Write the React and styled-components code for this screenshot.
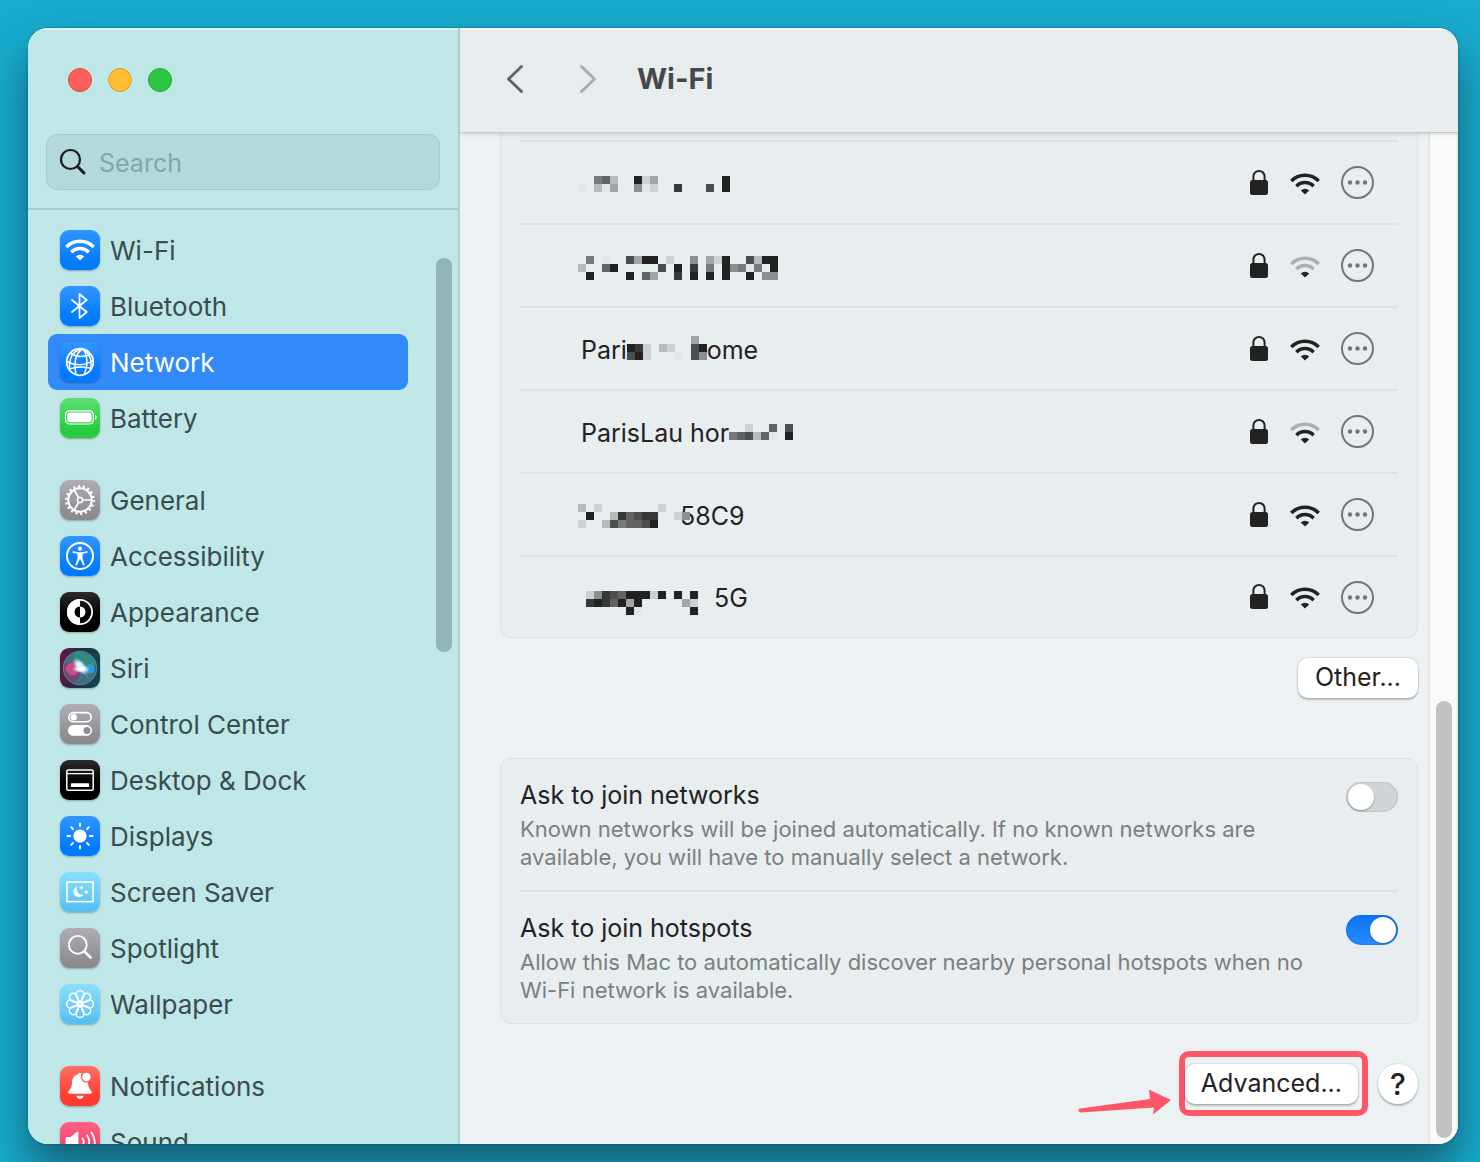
import React, { useState } from 'react';
import styled, { createGlobalStyle, css } from 'styled-components';

const GlobalStyle = createGlobalStyle`
  *, *::before, *::after {
    box-sizing: border-box;
  }

  body {
    margin: 0;
    font-family: Inter, 'Liberation Sans', sans-serif;
    background: #17acd0;
  }

  button, input {
    font-family: inherit;
  }
`;

const Desktop = styled.div`
  display: flex;
  height: 100vh;
  padding: 28px 22px 18px 28px;
  overflow: hidden;
`;

const Window = styled.div`
  display: flex;
  flex: 1;
  min-width: 0;
  border-radius: 20px;
  overflow: hidden;
  background: #ecf1f4;
  box-shadow: 0 0 2px rgba(0, 40, 60, 0.6), 0 24px 44px rgba(20, 50, 60, 0.64);
`;

/* sidebar */

const Sidebar = styled.aside`
  display: flex;
  flex-direction: column;
  flex: none;
  width: 432px;
  background: #bfe7e7;
  border-right: 2px solid #b0d0d2;
  box-shadow: inset 0 2px 0 #d9f1f1;
`;

const TrafficLights = styled.div`
  display: flex;
  gap: 16px;
  padding: 40px 40px 42px;
`;

const TrafficLight = styled.button`
  width: 24px;
  height: 24px;
  padding: 0;
  border: 1px solid ${({ $edge }) => $edge};
  border-radius: 50%;
  background: ${({ $color }) => $color};
`;

const SearchField = styled.label`
  display: flex;
  align-items: center;
  gap: 10px;
  height: 56px;
  margin: 0 18px;
  padding: 0 12px;
  border: 1px solid #a6cccd;
  border-radius: 11px;
  background: #b3d9da;
`;

const SearchInput = styled.input`
  flex: 1;
  min-width: 0;
  padding: 2px 0 0;
  border: 0;
  outline: 0;
  background: none;
  font-size: 25px;
  line-height: 32px;
  color: #222;

  &::placeholder {
    color: #86a5a6;
    opacity: 1;
  }
`;

const SidebarBody = styled.div`
  display: flex;
  flex: 1;
  min-height: 0;
  margin-top: 18px;
  border-top: 2px solid #a5cccd;
  overflow: hidden;
`;

const Nav = styled.nav`
  flex: 1;
  padding: 12px 28px 0 20px;
`;

const NavGroup = styled.ul`
  margin: 0 0 26px;
  padding: 0;
  list-style: none;
`;

const NavLink = styled.a`
  display: flex;
  align-items: center;
  gap: 10px;
  height: 56px;
  padding-left: 12px;
  border-radius: 9px;
  font-size: 26px;
  line-height: 32px;
  text-decoration: none;
  color: #3a4c4c;

  ${({ $active }) =>
    $active &&
    css`
      color: #fff;
      background: #3289f8;
    `}
`;

const NavLabel = styled.span`
  padding-top: 2px;
`;

const tileColors = {
  blue: 'linear-gradient(#3396ff, #007aff 80%)',
  green: 'linear-gradient(#5fe073, #28cc41 80%)',
  gray: 'linear-gradient(#aeaeb2, #8a8a8f 90%)',
  black: 'linear-gradient(#2b2b2c, #000 60%)',
  sky: 'linear-gradient(#8be0fc, #56bdf0)',
  red: 'linear-gradient(#ff6f66, #ff3b30 80%)',
  pink: 'linear-gradient(#ff6289, #ff2d55)',
  siri: 'linear-gradient(100deg, #6b1238, #1f2f4a 50%, #0e4a52)',
};

const Tile = styled.svg`
  flex: none;
  width: 40px;
  height: 40px;
  border-radius: 9px;
  background: ${({ $tone }) => tileColors[$tone]};
  box-shadow: 0 1px 2px rgba(0, 0, 0, 0.3);
`;

const SidebarScroll = styled.div`
  flex: none;
  width: 22px;
  padding-top: 48px;
`;

const Thumb = styled.div`
  width: 16px;
  height: ${({ $size }) => $size};
  border-radius: 8px;
  background: ${({ $color }) => $color};
`;

/* main pane */

const Main = styled.main`
  display: flex;
  flex-direction: column;
  flex: 1;
  min-width: 0;
`;

const Toolbar = styled.header`
  display: flex;
  align-items: center;
  flex: none;
  height: 105px;
  padding: 0 40px 2px;
  border-bottom: 1px solid #c3c8cb;
  background: #e7ecef;
  box-shadow: inset 0 2px 0 #f7f9fa, 0 2px 3px rgba(0, 0, 0, 0.1);
  z-index: 1;
`;

const NavButton = styled.button`
  width: 32px;
  height: 40px;
  margin-right: 40px;
  padding: 0;
  border: 0;
  background: none;
  color: #636466;

  &:disabled {
    color: #aaadaf;
  }
`;

const Title = styled.h1`
  margin: 0 0 0 -7px;
  font-size: 29px;
  line-height: 36px;
  font-weight: 700;
  color: #454748;
`;

const MainBody = styled.div`
  display: flex;
  flex: 1;
  min-height: 0;
  overflow: hidden;
`;

const Content = styled.div`
  flex: 1;
  min-width: 0;
  padding: 0 10px 0 40px;
`;

const ScrollTrack = styled.div`
  flex: none;
  width: 30px;
  height: 100%;
  padding: 568px 0 6px 6px;
  border-left: 2px solid #e5e7e8;
  border-right: 2px solid #eeeeee;
  background: #fafafa;
`;

const Card = styled.section`
  padding: 0 19px;
  border: 1px solid #dae0e3;
  border-radius: 11px;
  background: #e8edf0;
`;

const NetworkCard = styled(Card)`
  padding-top: 7px;
  border-top: 0;
  border-radius: 0 0 11px 11px;
`;

const NetworkList = styled.ul`
  margin: 0;
  padding: 0;
  list-style: none;
`;

const NetworkRow = styled.li`
  display: flex;
  align-items: center;
  height: 83px;
  padding: 0 24px 0 58px;
  border-top: 2px solid #dbe1e4;

  &:last-child {
    height: 82px;
  }
`;

const NetworkName = styled.div`
  display: flex;
  align-items: center;
  flex: 1;
  font-size: 25px;
  line-height: 32px;
  color: #222;
  white-space: pre;
`;

const NamePart = styled.span`
  padding-top: 2px;
  margin-left: ${({ $space }) => $space || 0}px;
`;

const Pixels = styled.svg`
  position: relative;
  flex: none;
  margin-left: ${({ $space }) => $space || 0}px;
  margin-right: ${({ $overlap }) => -($overlap || 0)}px;
`;

const NetworkStatus = styled.div`
  display: flex;
  align-items: center;
  gap: 21px;
`;

const MoreButton = styled.button`
  display: flex;
  padding: 0;
  border: 0;
  background: none;
  color: #737678;
`;

const Actions = styled.div`
  display: flex;
  justify-content: flex-end;
  align-items: center;
  padding: 20px 0 60px;
`;

const PushButton = styled.button`
  height: 40px;
  padding: 0 17px 2px;
  border: 0;
  border-radius: 10px;
  background: #fff;
  box-shadow: 0 0 1px 1px rgba(0, 0, 0, 0.08), 0 2px 2px rgba(0, 0, 0, 0.22);
  font-size: 25px;
  line-height: 32px;
  color: #222;
  white-space: nowrap;
`;

const Setting = styled.div`
  display: flex;
  justify-content: space-between;
  align-items: flex-start;
  padding: 19px 0;

  & + & {
    border-top: 2px solid #dbe1e4;
  }
`;

const SettingLabel = styled.label`
  display: block;
  font-size: 25px;
  line-height: 34px;
  color: #222;
`;

const SettingHint = styled.p`
  max-width: 800px;
  margin: 3px 0 0;
  font-size: 22px;
  line-height: 28px;
  color: #7b7f81;
`;

const Switch = styled.input`
  appearance: none;
  flex: none;
  width: 52px;
  height: 30px;
  margin: 4px 0 0;
  padding: 2px;
  border-radius: 15px;
  background: #d1d5d7;
  box-shadow: inset 0 0 2px rgba(0, 0, 0, 0.25);

  &::before {
    content: '';
    display: block;
    width: 26px;
    height: 26px;
    border-radius: 50%;
    background: #fff;
    box-shadow: 0 1px 2px rgba(0, 0, 0, 0.3);
  }

  &:checked {
    padding-left: 24px;
    background: linear-gradient(#0a75f5, #2a8bff);
  }
`;

const FooterActions = styled(Actions)`
  gap: 10px;
  padding: 27px 0 0;
`;

const Highlight = styled.div`
  position: relative;
  padding: 7px 4px 6px 0;
  border: 6px solid #ff5667;
  border-radius: 10px;

  ${PushButton} {
    padding: 0 16px 2px;
  }
`;

const Arrow = styled.svg`
  position: absolute;
  top: 30px;
  right: 190px;
`;

const HelpButton = styled(PushButton)`
  width: 40px;
  padding: 0;
  border-radius: 50%;
  font-size: 30px;
  font-weight: 500;
`;

/* icons */

const WifiShape = ({ faded = 0 }) => (
  <g fill="none" stroke="currentColor" strokeWidth="3.5">
    <path d="M6.3 16.9a19.2 19.2 0 0 1 27.4 0" opacity={faded > 0 ? 0.3 : 1} />
    <path d="M11.4 22.2a12 12 0 0 1 17.2 0" opacity={faded > 1 ? 0.3 : 1} />
    <path d="M20 30.6l-4.2-4.2a6 6 0 0 1 8.4 0z" fill="currentColor" stroke="none" />
  </g>
);

const rays = [0, 45, 90, 135, 180, 225, 270, 315];

const glyphs = {
  wifi: <WifiShape />,
  bluetooth: (
    <path
      d="M12 14l14.7 12-7.2 6V8l7.2 6L12 26"
      fill="none"
      stroke="#fff"
      strokeWidth="1.8"
      strokeLinejoin="round"
      strokeLinecap="round"
    />
  ),
  globe: (
    <g fill="none" stroke="#fff" strokeWidth="1.5">
      <circle cx="20" cy="20" r="13.3" strokeWidth="1.7" />
      <path d="M22.5 7c-7 4-9 14-6.5 25.5M22.5 7c5 5 6 16 1.5 25.5M22 7c-10 2-13 9-12.5 21M22.5 7c7 4 10 11 7.8 21" />
      <path d="M10.5 11.5c6 3.5 13 3.8 20 .8M6.8 19.5c8 4.5 18 4.5 26.2-1M9 27c8-2.5 16-2.5 22.5-.5" />
    </g>
  ),
  battery: (
    <g fill="#fff">
      <rect x="5.5" y="12.8" width="27.8" height="13.2" rx="4" fill="none" stroke="#fff" strokeWidth="1.2" />
      <rect x="7.2" y="14.6" width="24.4" height="9.6" rx="2.6" />
      <path d="M35 17c2.2.6 2.2 4.2 0 4.8z" />
    </g>
  ),
  gear: (
    <g fill="none" stroke="#fff">
      <circle cx="20" cy="20" r="13.6" strokeWidth="2.6" strokeDasharray="2.136 2.611" />
      <circle cx="20" cy="20" r="11.7" strokeWidth="2" />
      <circle cx="20" cy="20" r="2.6" strokeWidth="1.5" />
      <path d="M22.6 20h8.9M18.7 17.7L14.2 10M18.7 22.3L14.2 30" strokeWidth="1.7" />
    </g>
  ),
  accessibility: (
    <g fill="#fff">
      <circle cx="20" cy="20" r="13" fill="none" stroke="#fff" strokeWidth="2" />
      <circle cx="20" cy="12.7" r="2.1" />
      <path d="M13.2 15.3l5 1h3.6l5-1c1-.2 1.2 1.2.2 1.5l-4.5 1.2v4l2 6.5c.3 1-1.1 1.500-1.500.5L20.300 23.500h-.6L17 29c-.4 1-1.800.5-1.500-.5l2-6.500v-4L13 16.800c-1-.3-.8-1.700.2-1.500z" />
    </g>
  ),
  appearance: (
    <g>
      <circle cx="20" cy="20" r="12.1" fill="none" stroke="#fff" strokeWidth="1.8" />
      <path d="M20 7a13 13 0 0 0 0 26z" fill="#fff" />
      <path d="M20 14.500a5.500 5.500 0 0 0 0 11z" fill="#000" />
      <path d="M20 14.500a5.500 5.500 0 0 1 0 11z" fill="#fff" />
    </g>
  ),
  siri: (
    <g>
      <defs>
        <radialGradient id="siriGlow">
          <stop offset="0" stopColor="#fff" />
          <stop offset="0.45" stopColor="#f2fbff" stopOpacity="0.9" />
          <stop offset="1" stopColor="#9fd8ff" stopOpacity="0" />
        </radialGradient>
      </defs>
      <circle cx="20" cy="20" r="16.8" fill="#3f6f80" stroke="#5f9390" strokeWidth="0.8" />
      <path d="M13 5a17 17 0 0 1 23 12c-6 4-11 2-15 1S14 12 13 5z" fill="#2a9a80" opacity="0.7" />
      <path d="M4 16a17 17 0 0 0 8 18c6 0 8-6 8-14S8 14 4 16z" fill="#8a3a76" opacity="0.8" />
      <circle cx="12.500" cy="21" r="6.500" fill="#e2508a" opacity="0.750" />
      <circle cx="30" cy="21" r="4.500" fill="#2aa6f2" opacity="0.850" />
      <path d="M21 20l8 11" stroke="#d6606e" strokeWidth="1" />
      <ellipse cx="20.500" cy="18.500" rx="11" ry="5.500" fill="url(#siriGlow)" transform="rotate(48 20.500 18.500)" />
      <ellipse cx="21" cy="21" rx="9" ry="4" fill="url(#siriGlow)" />
    </g>
  ),
  controls: (
    <g fill="#fff">
      <rect x="8.800" y="8.600" width="22.400" height="9.200" rx="4.600" fill="none" stroke="#fff" strokeWidth="1.600" />
      <circle cx="13.700" cy="13.200" r="3.200" />
      <rect x="8" y="21" width="24" height="10.800" rx="5.400" />
      <circle cx="27" cy="26.400" r="3.500" fill="#8f8f94" />
    </g>
  ),
  dock: (
    <g>
      <rect x="6.800" y="10" width="26.400" height="20.200" rx="1.500" fill="none" stroke="#fff" strokeWidth="1.500" />
      <path d="M7 13.600h26" stroke="#fff" strokeWidth="1.300" />
      <rect x="10.800" y="23.300" width="18.400" height="3.800" rx="0.700" fill="#fff" />
    </g>
  ),
  displays: (
    <g>
      <circle cx="20" cy="20" r="6.600" fill="#fff" />
      {rays.map((angle) => (
        <path
          key={angle}
          d="M20 10V7.500"
          stroke="#fff"
          strokeWidth="2"
          strokeLinecap="round"
          transform={`rotate(${angle} 20 20)`}
        />
      ))}
    </g>
  ),
  screensaver: (
    <g fill="#fff">
      <rect x="7" y="10" width="26" height="19.600" fill="none" stroke="#fff" strokeWidth="1.600" />
      <path d="M17 14.500a5.500 5.500 0 1 0 6.700 7.800c-4.500 1.400-8.300-2.800-6.700-7.800z" />
      <path d="M21.500 13.200l.7 1.800 1.800.7-1.800.7-.7 1.800-.7-1.800-1.800-.7 1.800-.7zM26.200 17.600l.8 1.700 1.700.8-1.700.8-.8 1.700-.8-1.700-1.700-.8 1.700-.8z" />
    </g>
  ),
  spotlight: (
    <g fill="none" stroke="#fff">
      <circle cx="17.800" cy="16.800" r="8.900" strokeWidth="1.900" />
      <path d="M24.500 23.500l6 6" strokeWidth="2.600" strokeLinecap="round" />
    </g>
  ),
  wallpaper: (
    <g fill="none" stroke="#fff" strokeWidth="1.500">
      <circle cx="20" cy="20" r="2" />
      {rays.map((angle) => (
        <path
          key={angle}
          d="M20 18c-.8-1.600-4-3.600-4-7.400a4 4 0 0 1 8 0c0 3.800-3.200 5.800-4 7.400z"
          transform={`rotate(${angle} 20 20)`}
        />
      ))}
    </g>
  ),
  bell: (
    <g fill="#fff">
      <path d="M20 7c1 0 1.800.4 2 1.200A5.800 5.800 0 0 0 28 16.200c.2 4 .8 6.300 3.400 8.800 1.200 1.200.6 2.700-1 2.700H9.600c-1.600 0-2.200-1.500-1-2.700 3-3 3.200-5.500 3.500-9.500.2-3.800 2.400-6.200 5.900-7.200.2-.9 1-1.300 2-1.300z" />
      <path d="M16.200 29.700h7.600c-.6 2-1.900 3.200-3.800 3.200s-3.200-1.200-3.800-3.200z" />
      <circle cx="26.400" cy="11" r="5.600" fill="#ff645b" />
      <circle cx="26.400" cy="11" r="4.200" />
    </g>
  ),
  sound: (
    <g fill="none" stroke="#fff" strokeWidth="1.800" strokeLinecap="round">
      <path d="M6.500 16H11l6.500-5.500v19L11 24H6.500z" fill="#fff" strokeLinejoin="round" />
      <path d="M22.500 16.500q2.500 3.500 0 7M27 13.500q4.500 6.500 0 13M31.500 10.500q6.500 9.500 0 19" />
    </g>
  ),
};

const LockIcon = () => (
  <svg width="19" height="28" viewBox="0 0 19 28" aria-label="Locked">
    <rect x="0" y="11" width="18" height="15" rx="2.500" fill="#222" />
    <path d="M3.400 12.500V7.500a5.600 5.600 0 0 1 11.200 0v5" fill="none" stroke="#222" strokeWidth="2" />
  </svg>
);

const SignalIcon = ({ faded }) => (
  <svg width="30" height="24" viewBox="5 7 30 24" color="#222" aria-label="Signal strength">
    <WifiShape faded={faded} />
  </svg>
);

const MoreIcon = () => (
  <svg width="33" height="33" viewBox="0 0 33 33">
    <circle cx="16.500" cy="16.500" r="15.500" fill="none" stroke="currentColor" strokeWidth="2" />
    <circle cx="9" cy="16.500" r="2.200" fill="currentColor" />
    <circle cx="16.500" cy="16.500" r="2.200" fill="currentColor" />
    <circle cx="24" cy="16.500" r="2.200" fill="currentColor" />
  </svg>
);

const CELL = 8;

// each digit is a cell shade: 0 is close to the card, 9 is close to black
const shade = (digit) => {
  const t = (Number(digit) + 0.3) / 9.3;
  const mix = (base) => Math.round(base + (34 - base) * t);
  return `rgb(${mix(232)}, ${mix(237)}, ${mix(240)})`;
};

const Mosaic = ({ rows, top, space, overlap }) => {
  const width = Math.max(...rows.map((row) => row.length)) * CELL;
  return (
    <Pixels
      width={width}
      height="36"
      $space={space}
      $overlap={overlap}
      shapeRendering="crispEdges"
      aria-hidden="true"
    >
      {rows.map((row, y) =>
        row
          .split('')
          .map((digit, x) =>
            digit === '.' ? null : (
              <rect
                key={`${x}-${y}`}
                x={x * CELL}
                y={top + y * CELL}
                width={CELL}
                height={CELL}
                fill={shade(digit)}
              />
            ),
          ),
      )}
    </Pixels>
  );
};

const navGroups = [
  [
    { label: 'Wi-Fi', glyph: 'wifi', tone: 'blue' },
    { label: 'Bluetooth', glyph: 'bluetooth', tone: 'blue' },
    { label: 'Network', glyph: 'globe', tone: 'blue' },
    { label: 'Battery', glyph: 'battery', tone: 'green' },
  ],
  [
    { label: 'General', glyph: 'gear', tone: 'gray' },
    { label: 'Accessibility', glyph: 'accessibility', tone: 'blue' },
    { label: 'Appearance', glyph: 'appearance', tone: 'black' },
    { label: 'Siri', glyph: 'siri', tone: 'siri' },
    { label: 'Control Center', glyph: 'controls', tone: 'gray' },
    { label: 'Desktop & Dock', glyph: 'dock', tone: 'black' },
    { label: 'Displays', glyph: 'displays', tone: 'blue' },
    { label: 'Screen Saver', glyph: 'screensaver', tone: 'sky' },
    { label: 'Spotlight', glyph: 'spotlight', tone: 'gray' },
    { label: 'Wallpaper', glyph: 'wallpaper', tone: 'sky' },
  ],
  [
    { label: 'Notifications', glyph: 'bell', tone: 'red' },
    { label: 'Sound', glyph: 'sound', tone: 'pink' },
  ],
];

const networks = [
  {
    id: 1,
    faded: 0,
    name: <Mosaic top={11} rows={['..562..913........9', '0.203..401..8...7.9']} />,
  },
  {
    id: 2,
    faded: 2,
    name: (
      <Mosaic
        top={8}
        rows={['.5.0..7399.1..4.319..7299', '2..69.....7.9.8.5.94505.9', '.9....9.63..8.9.9.9..9.44']}
      />
    ),
  },
  {
    id: 3,
    faded: 0,
    name: (
      <>
        <NamePart $space={3}>Pari</NamePart>
        <Mosaic top={5} overlap={15} rows={['........3.', '981.21..79', '791...0.74']} />
        <NamePart>home</NamePart>
      </>
    ),
  },
  {
    id: 4,
    faded: 1,
    name: (
      <>
        <NamePart $space={3}>ParisLau hor</NamePart>
        <Mosaic top={10} rows={['..1..6.7', '567260.9']} />
      </>
    ),
  },
  {
    id: 5,
    faded: 0,
    name: (
      <>
        <Mosaic top={7} overlap={10} rows={['2.1.......1...', '.9..286788..14', '1..2756679....']} />
        <NamePart>58C9</NamePart>
      </>
    ),
  },
  {
    id: 6,
    faded: 0,
    name: (
      <>
        <Mosaic top={12} space={8} rows={['1487699919.9.9', '8986939.....31', '.....90......9']} />
        <NamePart $space={16}>5G</NamePart>
      </>
    ),
  },
];

const App = () => {
  const [active, setActive] = useState('Network');

  return (
    <>
      <GlobalStyle />
      <Desktop>
        <Window>
          <Sidebar>
            <TrafficLights>
              <TrafficLight $color="#ff5f57" $edge="#ef3f38" aria-label="Close" />
              <TrafficLight $color="#febc2e" $edge="#dea02a" aria-label="Minimize" />
              <TrafficLight $color="#28c840" $edge="#22ae36" aria-label="Zoom" />
            </TrafficLights>
            <SearchField>
              <svg width="30" height="30" viewBox="0 0 30 30" fill="none" stroke="#1c1c1c">
                <circle cx="11.500" cy="12.500" r="9.500" strokeWidth="2.200" />
                <path d="M18.500 19.500l6.500 6.500" strokeWidth="3" strokeLinecap="round" />
              </svg>
              <SearchInput type="text" placeholder="Search" aria-label="Search" />
            </SearchField>
            <SidebarBody>
              <Nav>
                {navGroups.map((group) => (
                  <NavGroup key={group[0].label}>
                    {group.map(({ label, glyph, tone }) => (
                      <li key={label}>
                        <NavLink href="#" $active={label === active} onClick={() => setActive(label)}>
                          <Tile $tone={tone} viewBox="0 0 40 40" color="#fff" aria-hidden="true">
                            {glyphs[glyph]}
                          </Tile>
                          <NavLabel>{label}</NavLabel>
                        </NavLink>
                      </li>
                    ))}
                  </NavGroup>
                ))}
              </Nav>
              <SidebarScroll>
                <Thumb $color="#93b4b5" $size="394px" />
              </SidebarScroll>
            </SidebarBody>
          </Sidebar>

          <Main>
            <Toolbar>
              <NavButton aria-label="Back">
                <svg width="32" height="32" viewBox="0 0 32 32" fill="none" stroke="currentColor">
                  <path d="M21.500 4.500L8.500 17l13 12.500" strokeWidth="3" strokeLinecap="round" strokeLinejoin="round" />
                </svg>
              </NavButton>
              <NavButton aria-label="Forward" disabled>
                <svg width="32" height="32" viewBox="0 0 32 32" fill="none" stroke="currentColor">
                  <path d="M9.500 4.500l13 12.500-13 12.500" strokeWidth="3" strokeLinecap="round" strokeLinejoin="round" />
                </svg>
              </NavButton>
              <Title>Wi-Fi</Title>
            </Toolbar>

            <MainBody>
              <Content>
                <NetworkCard>
                  <NetworkList>
                    {networks.map(({ id, name, faded }) => (
                      <NetworkRow key={id}>
                        <NetworkName>{name}</NetworkName>
                        <NetworkStatus>
                          <LockIcon />
                          <SignalIcon faded={faded} />
                          <MoreButton aria-label="More">
                            <MoreIcon />
                          </MoreButton>
                        </NetworkStatus>
                      </NetworkRow>
                    ))}
                  </NetworkList>
                </NetworkCard>

                <Actions>
                  <PushButton>Other...</PushButton>
                </Actions>

                <Card>
                  <Setting>
                    <div>
                      <SettingLabel htmlFor="join-networks">Ask to join networks</SettingLabel>
                      <SettingHint>
                        Known networks will be joined automatically. If no known networks are
                        available, you will have to manually select a network.
                      </SettingHint>
                    </div>
                    <Switch type="checkbox" id="join-networks" />
                  </Setting>
                  <Setting>
                    <div>
                      <SettingLabel htmlFor="join-hotspots">Ask to join hotspots</SettingLabel>
                      <SettingHint>
                        Allow this Mac to automatically discover nearby personal hotspots when no
                        Wi-Fi network is available.
                      </SettingHint>
                    </div>
                    <Switch type="checkbox" id="join-hotspots" defaultChecked />
                  </Setting>
                </Card>

                <FooterActions>
                  <Highlight>
                    <Arrow width="94" height="28" viewBox="0 0 94 28" fill="#ff5667">
                      <path d="M2 21.500L72 12l-1-9.500L93 13 75 27.500l1-7L3 25.500c-3 0-3-3.600-1-4z" />
                    </Arrow>
                    <PushButton>Advanced...</PushButton>
                  </Highlight>
                  <HelpButton aria-label="Help">?</HelpButton>
                </FooterActions>
              </Content>
              <ScrollTrack>
                <Thumb $color="#c1c1c1" $size="100%" />
              </ScrollTrack>
            </MainBody>
          </Main>
        </Window>
      </Desktop>
    </>
  );
};

export default App;
